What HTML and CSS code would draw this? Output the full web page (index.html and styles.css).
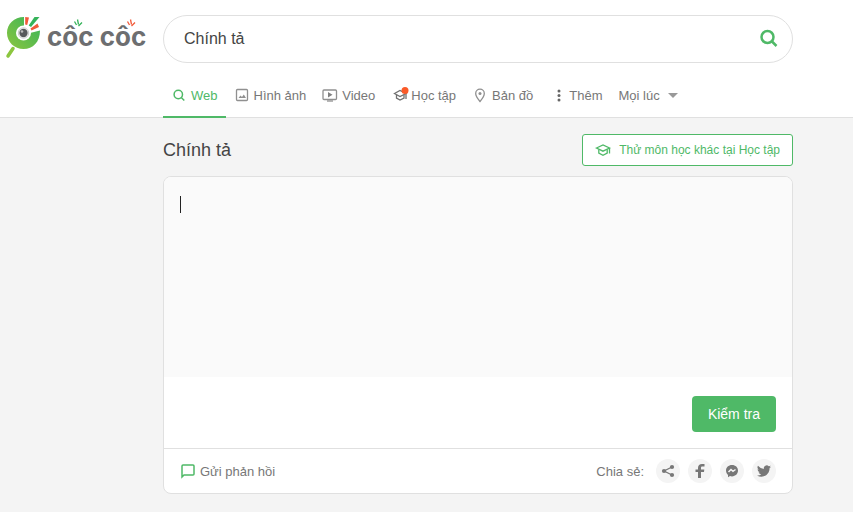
FILE: index.html
```html
<!DOCTYPE html>
<html lang="vi">
<head>
  <meta charset="utf-8">
  <meta name="viewport" content="width=device-width, initial-scale=1">
  <title>Chính tả - Cốc Cốc</title>
  <link rel="stylesheet" href="styles.css">
</head>
<body>
  <header class="header">
    <a class="logo" href="#" aria-label="Cốc Cốc">
      <svg width="148" height="48" viewBox="0 0 148 48">
        <defs>
          <linearGradient id="leaf" x1="0" y1="1" x2="1" y2="0">
            <stop offset="0" stop-color="#8cc63f"/>
            <stop offset="1" stop-color="#35b35a"/>
          </linearGradient>
        </defs>
        <path d="M8 41L13 33.500" stroke="#8cc63f" stroke-width="3.500" stroke-linecap="round"/>
        <path d="M24 2C14 2 7 9 7 18C7 27 14.500 34 23.500 34C33 34 40 27 40 15.500L30 18L24 11Z" fill="url(#leaf)"/>
        <circle cx="23.500" cy="18" r="7.500" fill="#fff"/>
        <circle cx="23.500" cy="18" r="5.200" fill="none" stroke="#bbb" stroke-width="0.800"/>
        <circle cx="23.500" cy="18" r="4.200" fill="#58595b"/>
        <circle cx="22" cy="16.500" r="1.300" fill="#bbb"/>
        <path d="M25.200 2L29 2.500L27.200 10L25.200 9.500Z" fill="#f15a3a"/>
        <path d="M34.500 2H39.500L31 12L28.700 10.500Z" fill="#35b35a"/>
        <path d="M37.500 8.500L39 12L31.500 15.500L30.500 13.500Z" fill="#f15a3a"/>
        <text x="47" y="31" class="logo-text">côc côc</text>
        <path d="M74.500 6.500L76.500 10M77.500 4.500L78.500 9.500M82 7.500L78.500 11" stroke="#35b35a" stroke-width="1.300"/>
        <path d="M127.500 6.500L129.500 10M130.500 4.500L131.500 9.500M135 7.500L131.500 11" stroke="#f15a3a" stroke-width="1.300"/>
      </svg>
    </a>

    <form class="search">
      <input class="search-input" type="text" value="Chính tả" aria-label="Tìm kiếm">
      <button class="search-button" type="submit" aria-label="Tìm">
        <svg width="18" height="18" viewBox="0 0 18 18" fill="none" stroke="#4fb967" stroke-width="2.500">
          <circle cx="7.500" cy="7" r="6"/>
          <path d="M11.500 11L16.500 16"/>
        </svg>
      </button>
    </form>

    <nav class="tabs">
      <a class="tab tab-active" href="#">
        <svg class="icon" viewBox="0 0 16 16" fill="none" stroke="currentColor" stroke-width="1.500">
          <circle cx="7.300" cy="7.500" r="4.200"/>
          <path d="M10.300 10.500L13.300 13.500"/>
        </svg>
        Web
      </a>
      <a class="tab" href="#">
        <svg class="icon" viewBox="0 0 16 16" fill="none" stroke="#909090">
          <rect x="2.500" y="2.500" width="11" height="11" rx="1" stroke-width="1.300"/>
          <path d="M4.500 11L6.500 8.500L8 10L9.800 7.500L12 11Z" fill="#909090" stroke="none"/>
        </svg>
        Hình ảnh
      </a>
      <a class="tab" href="#">
        <svg class="icon" viewBox="0 0 16 16" fill="none" stroke="#909090" stroke-width="1.300">
          <rect x="1" y="3" width="13.500" height="9.500" rx="1"/>
          <path d="M5 14H11"/>
          <path d="M6 5L10.500 7.700L6 10.500Z" fill="#808080" stroke="none"/>
        </svg>
        Video
      </a>
      <a class="tab" href="#">
        <svg class="icon" viewBox="0 0 16 16" fill="none" stroke="#707070" stroke-width="1.300">
          <path d="M3.500 6.500L9 3.500L15 6.500L9 9.500Z"/>
          <path d="M5.500 8V11L9 13L13 11V8M15 6.500V12"/>
          <circle cx="14" cy="3.500" r="3.500" fill="#fa5a28" stroke="none"/>
        </svg>
        Học tập
      </a>
      <a class="tab" href="#">
        <svg class="icon" viewBox="0 0 16 16" fill="none" stroke="#909090" stroke-width="1.300">
          <path d="M8 14.500C5.500 11.500 3.700 9 3.700 6.500A4.300 4.300 0 0 1 12.300 6.500C12.300 9 10.500 11.500 8 14.500Z"/>
          <circle cx="8" cy="6.500" r="1.500" fill="#909090" stroke="none"/>
        </svg>
        Bản đồ
      </a>
      <a class="tab" href="#">
        <svg class="icon" viewBox="0 0 16 16" fill="#666">
          <circle cx="10" cy="4" r="1.500"/>
          <circle cx="10" cy="8.500" r="1.500"/>
          <circle cx="10" cy="13" r="1.500"/>
        </svg>
        Thêm
      </a>
      <label class="time">
        <select class="time-select" aria-label="Thời gian">
          <option>Mọi lúc</option>
        </select>
        <svg width="10" height="5" viewBox="0 0 10 5" fill="#999"><path d="M0 0H10L5 5Z"/></svg>
      </label>
    </nav>
  </header>

  <main class="main">
    <div class="heading">
      <h1 class="title">Chính tả</h1>
      <a class="study-link" href="#">
        <svg class="icon" viewBox="0 0 16 16" fill="none" stroke="currentColor" stroke-width="1.300">
          <path d="M1.500 6L8 3L14.500 6L8 9.200Z"/>
          <path d="M3.800 7.500V11L8 13.300L12.200 11V7.500M14.500 6V11.500"/>
        </svg>
        Thử môn học khác tại Học tập
      </a>
    </div>

    <form class="card">
      <textarea class="text" aria-label="Văn bản cần kiểm tra"></textarea>
      <div class="actions">
        <button class="check-button" type="submit">Kiểm tra</button>
      </div>
      <div class="card-footer">
        <a class="feedback" href="#">
          <svg class="icon" viewBox="0 0 16 16" fill="none" stroke="#4fb967" stroke-width="1.500">
            <path d="M2 14V3A1 1 0 0 1 3 2H13A1 1 0 0 1 14 3V11A1 1 0 0 1 13 12H4Z"/>
          </svg>
          Gửi phản hồi
        </a>
        <div class="share">
          <span class="share-label">Chia sẻ:</span>
          <button class="share-button" type="button" aria-label="Chia sẻ">
            <svg width="14" height="14" viewBox="0 0 14 14" fill="#777" stroke="#777">
              <path d="M11 3L3 7L11 11" fill="none" stroke-width="1.300"/>
              <g stroke="none"><circle cx="11" cy="3" r="2.100"/><circle cx="3" cy="7" r="2.100"/><circle cx="11" cy="11" r="2.100"/></g>
            </svg>
          </button>
          <button class="share-button" type="button" aria-label="Facebook">
            <svg width="14" height="14" viewBox="0 0 14 14" fill="#777">
              <path d="M5 14V8H2.500V5.500H5V4C5 1.500 6.500 0 9 0H11.500V2.600H9.500C8.400 2.600 8 3 8 4V5.500H11.300L11 8H8V14Z"/>
            </svg>
          </button>
          <button class="share-button" type="button" aria-label="Messenger">
            <svg width="14" height="14" viewBox="0 0 14 14">
              <path d="M7 1C3.500 1 1 3.400 1 6.600C1 8.500 1.800 10 3 11V13.200L5 12.100C5.600 12.300 6.300 12.400 7 12.400C10.500 12.400 13 9.900 13 6.600C13 3.400 10.500 1 7 1Z" fill="#777"/>
              <path d="M3.500 8L6 5.500L8 7.300L10.500 5.500" fill="none" stroke="#f4f4f4" stroke-width="1.500"/>
            </svg>
          </button>
          <button class="share-button" type="button" aria-label="Twitter">
            <svg width="14" height="14" viewBox="0 0 24 24" fill="#777">
              <path d="M24 4.600a10 10 0 0 1-2.800.8 5 5 0 0 0 2.100-2.700 10 10 0 0 1-3.100 1.200 4.900 4.900 0 0 0-8.400 4.500A14 14 0 0 1 1.700 3.100a4.900 4.900 0 0 0 1.500 6.600A4.900 4.900 0 0 1 1 9.100a4.900 4.900 0 0 0 3.900 4.900 5 5 0 0 1-2.200.1 4.900 4.900 0 0 0 4.600 3.400A9.900 9.900 0 0 1 0 19.500a14 14 0 0 0 7.500 2.200c9.100 0 14.300-7.700 14-14.600A10 10 0 0 0 24 4.600Z"/>
            </svg>
          </button>
        </div>
      </div>
    </form>
  </main>
</body>
</html>
```
FILE: styles.css
```css
* {
  box-sizing: border-box;
  margin: 0;
  padding: 0;
}
body {
  font-family: "Liberation Sans", Arial, sans-serif;
  font-size: 13px;
  color: #777;
  background-color: #fff;
}
a {
  color: inherit;
  text-decoration: none;
}
svg {
  display: block;
  flex-shrink: 0;
  overflow: visible;
}
input, select, textarea, button {
  font-family: inherit;
  border: none;
  outline: none;
}
button {
  cursor: pointer;
}
.icon {
  width: 16px;
  height: 16px;
}

/* Header */
.header {
  display: grid;
  grid-template-columns: 163px minmax(0, 630px);
  row-gap: 11px;
  padding: 15px 60px 0 0;
  border-bottom: 1px solid #e0e0e0;
}
.logo-text {
  font-family: Inter, sans-serif;
  font-size: 26px;
  font-weight: 700;
  fill: #6d6e70;
}
.search {
  display: flex;
  height: 48px;
  padding: 0 14px 0 20px;
  border: 1px solid #e0e0e0;
  border-radius: 24px;
}
.search-input {
  flex: 1;
  min-width: 0;
  font-size: 16px;
  color: #444;
  background: none;
}
.search-button {
  background: none;
}
.tabs {
  grid-column: 2;
  display: flex;
  height: 44px;
  margin-bottom: -1px;
}
.tab, .time {
  display: flex;
  align-items: center;
  gap: 4px;
  padding: 0 8px 2px;
  white-space: nowrap;
}
.tab-active {
  color: #4fb967;
  box-shadow: inset 0 -2px #4fb967;
}
.time {
  gap: 7px;
}
.time-select {
  appearance: none;
  font-size: 13px;
  color: #777;
  background: none;
}

/* Spelling check */
.main {
  padding: 16px 60px 18px 163px;
  background-color: #f4f4f4;
}
.heading {
  display: flex;
  justify-content: space-between;
  align-items: center;
  max-width: 630px;
  margin-bottom: 10px;
}
.title {
  font-size: 18px;
  font-weight: 400;
  color: #444;
}
.study-link {
  display: flex;
  align-items: center;
  gap: 8px;
  height: 32px;
  padding: 0 12px;
  font-size: 12px;
  color: #4fb967;
  background-color: #fff;
  border: 1px solid #4fb967;
  border-radius: 3px;
}
.card {
  max-width: 630px;
  background-color: #fff;
  border: 1px solid #e0e0e0;
  border-radius: 8px;
  overflow: hidden;
}
.text {
  display: block;
  width: 100%;
  height: 200px;
  padding: 16px;
  font-size: 16px;
  color: #444;
  resize: none;
  /* idle caret at the start of the empty text */
  background: linear-gradient(#222, #222) 16px 19px / 1px 17px no-repeat #fafafa;
}
.text:focus {
  background: #fafafa;
}
.actions {
  display: flex;
  justify-content: flex-end;
  padding: 19px 16px 16px;
}
.check-button {
  height: 36px;
  padding: 0 16px;
  font-size: 14px;
  color: #fff;
  background-color: #4fb967;
  border-radius: 4px;
}
.card-footer {
  display: flex;
  justify-content: space-between;
  align-items: center;
  height: 45px;
  padding: 0 16px;
  border-top: 1px solid #e0e0e0;
}
.feedback {
  display: flex;
  align-items: center;
  gap: 4px;
}
.share {
  display: flex;
  align-items: center;
  gap: 8px;
}
.share-label {
  margin-right: 4px;
}
.share-button {
  display: flex;
  align-items: center;
  justify-content: center;
  width: 24px;
  height: 24px;
  background-color: #f4f4f4;
  border-radius: 50%;
}
```
